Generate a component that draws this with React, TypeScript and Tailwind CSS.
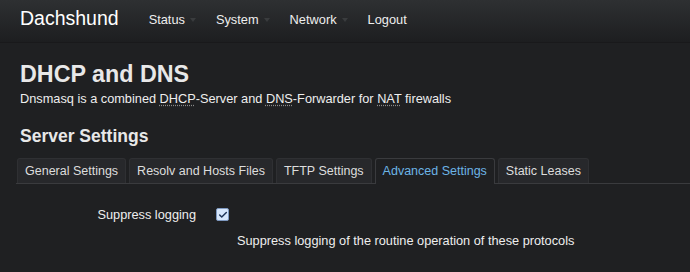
import { Check } from 'lucide-react'

const navItems = [
  { label: 'Status', caret: true },
  { label: 'System', caret: true },
  { label: 'Network', caret: true },
  { label: 'Logout', caret: false },
]

const tabs = ['General Settings', 'Resolv and Hosts Files', 'TFTP Settings', 'Advanced Settings', 'Static Leases']

export default function App() {
  return (
    <div className="w-[690px] h-[272px] bg-[#1f2022] text-[#e6e6e6] overflow-hidden" style={{ fontFamily: '"Liberation Sans", Arial, sans-serif' }}>
      <header className="h-[43px] flex items-center pl-5 bg-gradient-to-b from-[#2e3032] to-[#1d1e20] border-b border-[#19191b]">
        <span className="text-[19.5px] text-white mr-[30px] -mt-[4px]">Dachshund</span>
        {navItems.map(item => (
          <span key={item.label} className="flex items-center text-[12.8px] text-[#eeeeee] mr-[20px] -mt-[3px]">
            {item.label}
            {item.caret && (
              <span className="ml-[5px] mt-[1px] w-0 h-0 border-l-[3px] border-r-[3px] border-t-[4px] border-l-transparent border-r-transparent border-t-[#3a3c3e]" />
            )}
          </span>
        ))}
      </header>

      <main className="px-5 pt-[18px]">
        <h1 className="text-[23.3px] font-bold leading-[27px] text-[#e8e8e8]">DHCP and DNS</h1>
        <p className="text-[12.75px] leading-[16px] mt-[3px] text-[#eeeeee]">
          Dnsmasq is a combined <abbr className="underline decoration-dotted decoration-[#8a8a8a] underline-offset-2">DHCP</abbr>-Server and{' '}
          <abbr className="underline decoration-dotted decoration-[#8a8a8a] underline-offset-2">DNS</abbr>-Forwarder for{' '}
          <abbr className="underline decoration-dotted decoration-[#8a8a8a] underline-offset-2">NAT</abbr> firewalls
        </p>
        <h2 className="text-[17.5px] font-bold leading-[20px] mt-[19px] text-[#e8e8e8]">Server Settings</h2>
      </main>

      <nav className="ml-4 mt-[12px] flex items-end gap-[3px] border-b border-[#3a3b3e] pl-[1px]">
        {tabs.map(tab => {
          const active = tab === 'Advanced Settings'
          return (
            <span
              key={tab}
              className={`flex items-center px-[7px] text-[12.5px] rounded-t-[3px] border border-b-0 ${
                active
                  ? 'bg-[#1f2022] border-[#3a3b3e] text-[#6cb4e6] -mb-px h-[26px] pb-px'
                  : 'bg-[#27282b] border-[#2f3033] text-[#dddddd] h-[25px]'
              }`}
            >
              {tab}
            </span>
          )
        })}
      </nav>

      <section className="mt-[21px]">
        <div className="flex items-center">
          <span className="w-[196px] text-right text-[12.75px] text-[#eeeeee]">Suppress logging</span>
          <span className="ml-[20px] w-[13px] h-[13px] rounded-[2px] border border-[#7d98c0] bg-[#d6e6fb] flex items-center justify-center">
            <Check size={10} strokeWidth={3.5} className="text-[#1f3558]" />
          </span>
        </div>
        <p className="ml-[237px] mt-[7px] text-[12.75px] text-[#eeeeee]">Suppress logging of the routine operation of these protocols</p>
      </section>
    </div>
  )
}
